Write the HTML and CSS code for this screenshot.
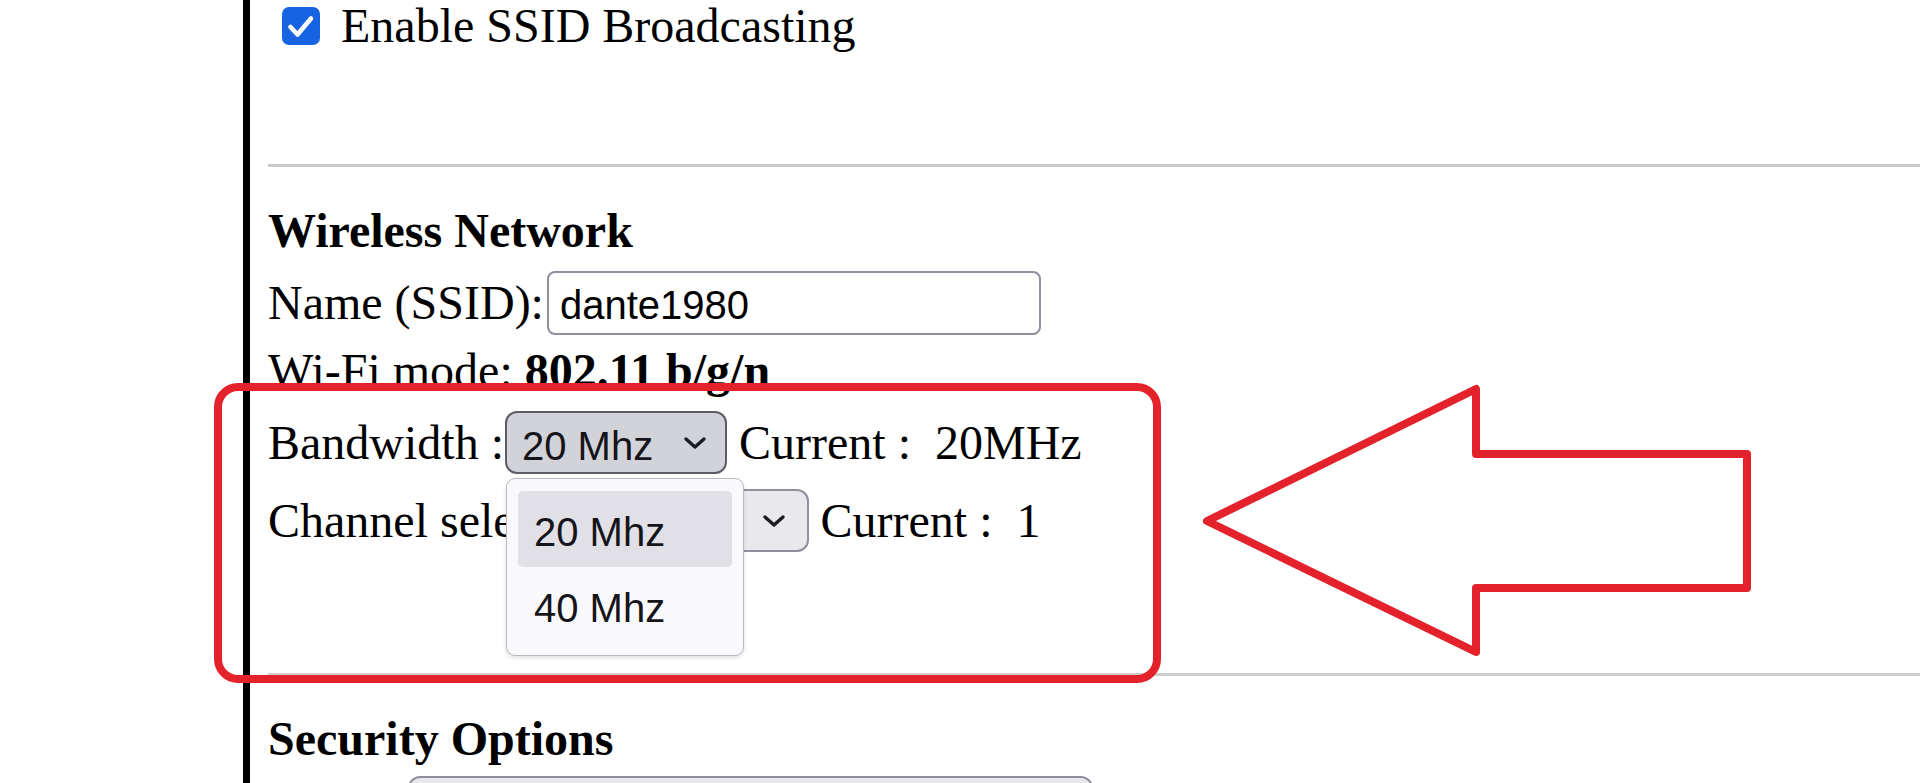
FILE: index.html
```html
<!DOCTYPE html>
<html lang="en">
<head>
<meta charset="utf-8">
<title>Wireless Settings</title>
<link rel="stylesheet" href="styles.css">
</head>
<body>
<div class="page">
  <div class="content">
    <div class="row row-check">
      <span class="checkbox"><svg class="check" viewBox="0 0 38 38" width="38" height="38"><polyline points="8.5,20 15.5,27.5 29,11.5" /></svg></span>
      <span class="check-label">Enable SSID Broadcasting</span>
    </div>
    <div class="rule rule-top"></div>
    <div class="row heading heading-wireless">Wireless Network</div>
    <div class="row row-name">
      <span>Name (SSID):</span>
      <span class="textbox">dante1980</span>
    </div>
    <div class="row row-mode">Wi-Fi mode:&nbsp;<b>802.11 b/g/n</b></div>
    <div class="row row-bw">
      <span>Bandwidth :</span>
      <span class="select select-open"><span class="select-value">20 Mhz</span><svg class="chevron" viewBox="0 0 24 14" width="24" height="14"><polyline points="3,3 12,11 21,3" /></svg></span>
      <span class="current">Current :&nbsp; 20MHz</span>
    </div>
    <div class="row row-ch">
      <span>Channel select :</span>
      <span class="select select-ch"><span class="select-value">1</span><svg class="chevron" viewBox="0 0 24 14" width="24" height="14"><polyline points="3,3 12,11 21,3" /></svg></span>
      <span class="current">Current :&nbsp; 1</span>
    </div>
    <div class="rule rule-bottom"></div>
    <div class="row heading heading-security">Security Options</div>
    <div class="row row-sec">
      <span class="select select-sec"></span>
    </div>
  </div>

  <div class="popup">
    <div class="option option-active">20 Mhz</div>
    <div class="option">40 Mhz</div>
  </div>

  <div class="callout"></div>

  <svg class="arrow" viewBox="0 0 1920 783" width="1920" height="783">
    <polygon points="1207,521 1476,389 1476,454 1747,454 1747,588 1476,588 1476,652" />
  </svg>
</div>
</body>
</html>
```

FILE: styles.css
```css
html, body {
  margin: 0;
  padding: 0;
  background: #ffffff;
}

body {
  width: 1920px;
  height: 783px;
  overflow: hidden;
  font-family: "Liberation Serif", "Times New Roman", serif;
  font-size: 48px;
  color: #000000;
}

.page {
  position: relative;
  width: 1920px;
  height: 783px;
  overflow: hidden;
}

.content {
  margin-left: 243px;
  border-left: 7px solid #000000;
  padding-left: 18px;
  height: 783px;
}

.row {
  display: flex;
  align-items: center;
  line-height: 1;
  white-space: pre;
}

.row-check {
  height: 52px;
}

.checkbox {
  width: 38px;
  height: 38px;
  margin-left: 14px;
  border-radius: 7px;
  background: #1763e2;
  display: flex;
  align-items: center;
  justify-content: center;
}

.check polyline {
  fill: none;
  stroke: #ffffff;
  stroke-width: 4.6;
  stroke-linecap: round;
  stroke-linejoin: round;
}

.check-label {
  margin-left: 21px;
}

.rule {
  height: 0;
  border-top: 3px solid #c9c9c9;
}

.rule-top {
  margin-top: 112px;
}

.rule-bottom {
  margin-top: 121px;
  border-top-color: #cfcfcf;
}

.heading {
  height: 48px;
  font-weight: bold;
}

.heading-wireless {
  margin-top: 40px;
}

.heading-security {
  margin-top: 39px;
}

.row-name {
  height: 64px;
  margin-top: 16px;
}

.textbox {
  box-sizing: border-box;
  width: 494px;
  height: 64px;
  margin-left: 3px;
  padding: 4px 0 0 11px;
  border: 2px solid #8f8f9d;
  border-radius: 8px;
  background: #ffffff;
  font-family: "Liberation Sans", Arial, sans-serif;
  font-size: 40px;
  display: flex;
  align-items: center;
}

.row-mode {
  height: 48px;
  margin-top: 12px;
}

.row-bw {
  height: 63px;
  margin-top: 16px;
}

.row-ch {
  height: 63px;
  margin-top: 15px;
}

.select {
  box-sizing: border-box;
  height: 63px;
  border: 2px solid #8f8f9d;
  border-radius: 12px;
  background: #e9e9ed;
  font-family: "Liberation Sans", Arial, sans-serif;
  font-size: 40px;
  color: #15141a;
  display: flex;
  align-items: center;
  justify-content: space-between;
  padding: 0 18px 0 15px;
}

.select-value {
  padding-top: 7px;
}

.select-open {
  width: 222px;
  margin-left: 1px;
  background: #d2d2d9;
  border-color: #5c5c66;
}

.select-ch {
  width: 234px;
  padding-right: 21px;
}

.chevron polyline {
  fill: none;
  stroke: #1b1b22;
  stroke-width: 3.4;
  stroke-linecap: round;
  stroke-linejoin: round;
}

.current {
  margin-left: 12px;
}

.row-sec {
  height: 63px;
  margin-top: 13px;
}

.select-sec {
  width: 685px;
  margin-left: 140px;
}

.popup {
  position: absolute;
  left: 506px;
  top: 478px;
  box-sizing: border-box;
  width: 238px;
  height: 178px;
  padding: 12px 11px;
  border: 1.5px solid #b9b9c0;
  border-radius: 9px;
  background: #f9f9fb;
  box-shadow: 0 2px 4px rgba(0, 0, 0, 0.12);
  font-family: "Liberation Sans", Arial, sans-serif;
  font-size: 40px;
  color: #15141a;
}

.option {
  box-sizing: border-box;
  height: 76px;
  padding: 5px 0 0 16px;
  display: flex;
  align-items: center;
  border-radius: 5px;
  line-height: 1;
}

.option-active {
  background: #e0e0e6;
}

.callout {
  position: absolute;
  left: 214px;
  top: 383px;
  box-sizing: border-box;
  width: 947px;
  height: 300px;
  border: 8px solid #e3222b;
  border-radius: 24px;
}

.arrow {
  position: absolute;
  left: 0;
  top: 0;
  pointer-events: none;
}

.arrow polygon {
  fill: none;
  stroke: #e3222b;
  stroke-width: 8;
  stroke-linejoin: round;
}
```
